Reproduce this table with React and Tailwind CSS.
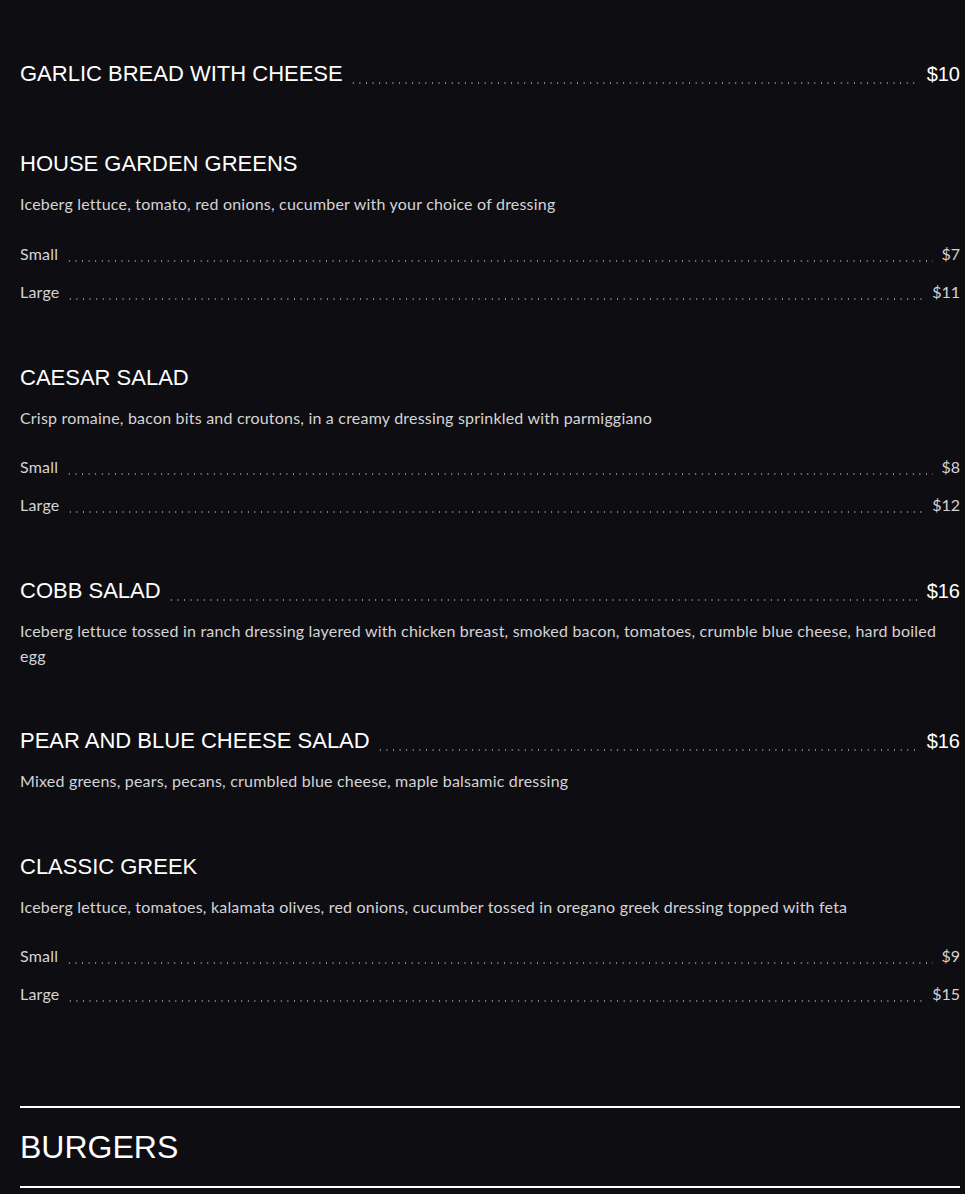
import React from "react";

const items = [
  { name: "GARLIC BREAD WITH CHEESE", price: "$10" },
  {
    name: "HOUSE GARDEN GREENS",
    desc: "Iceberg lettuce, tomato, red onions, cucumber with your choice of dressing",
    sizes: [["Small", "$7"], ["Large", "$11"]],
  },
  {
    name: "CAESAR SALAD",
    desc: "Crisp romaine, bacon bits and croutons, in a creamy dressing sprinkled with parmiggiano",
    sizes: [["Small", "$8"], ["Large", "$12"]],
  },
  {
    name: "COBB SALAD",
    price: "$16",
    desc: "Iceberg lettuce tossed in ranch dressing layered with chicken breast, smoked bacon, tomatoes, crumble blue cheese, hard boiled egg",
  },
  {
    name: "PEAR AND BLUE CHEESE SALAD",
    price: "$16",
    desc: "Mixed greens, pears, pecans, crumbled blue cheese, maple balsamic dressing",
  },
  {
    name: "CLASSIC GREEK",
    desc: "Iceberg lettuce, tomatoes, kalamata olives, red onions, cucumber tossed in oregano greek dressing topped with feta",
    sizes: [["Small", "$9"], ["Large", "$15"]],
  },
];

function Leader({ className = "" }) {
  return (
    <div
      className={
        "flex-1 h-[2px] bg-[radial-gradient(circle,#8e8e92_0.75px,transparent_1px)] bg-[length:6.6px_2px] bg-repeat-x " +
        className
      }
    />
  );
}

function Item({ item, index, prev }) {
  let mt = "";
  if (index === 1) mt = "mt-[62px]";
  else if (index > 1) mt = prev && prev.sizes ? "mt-[60px]" : "mt-[59px]";
  return (
    <div className={mt}>
      <div className="flex items-end h-[28px]">
        <h3 className="text-[22px] leading-[28px] text-white font-['Liberation_Sans',Arial,sans-serif] whitespace-nowrap">
          {item.name}
        </h3>
        {item.price && (
          <>
            <Leader className="mx-[7px] mb-[4px]" />
            <span className="text-[20px] leading-[28px] text-white font-['Liberation_Sans',sans-serif]">{item.price}</span>
          </>
        )}
      </div>
      {item.desc && (
        <p className="mt-[14px] text-[16px] tracking-[0.2px] leading-[24.5px] text-[#d4d4d6] font-['Lato',sans-serif] pr-[10px]">
          {item.desc}
        </p>
      )}
      {item.sizes && (
        <div className="mt-[25px] flex flex-col gap-[14px]">
          {item.sizes.map(([s, p]) => (
            <div key={s} className="flex items-end h-[24px]">
              <span className="text-[16px] tracking-[0.2px] leading-[24px] text-[#d4d4d6] font-['Lato',sans-serif]">{s}</span>
              <Leader className="mx-[8px] mb-[4px]" />
              <span className="text-[16px] leading-[24px] text-[#d4d4d6] font-['Lato',sans-serif]">{p}</span>
            </div>
          ))}
        </div>
      )}
    </div>
  );
}

export default function App() {
  return (
    <div className="min-h-[1194px] bg-[#0e0d12] pl-[20px] pr-[5px] pt-[60px]">
      {items.map((it, i) => (
        <Item key={it.name} item={it} index={i} prev={items[i - 1]} />
      ))}
      <div className="mt-[100px] border-t-2 border-white" />
      <h2 className="py-[17px] text-[32px] leading-[44px] text-white font-['Liberation_Sans',Arial,sans-serif]">
        BURGERS
      </h2>
      <div className="border-t-2 border-white" />
    </div>
  );
}
